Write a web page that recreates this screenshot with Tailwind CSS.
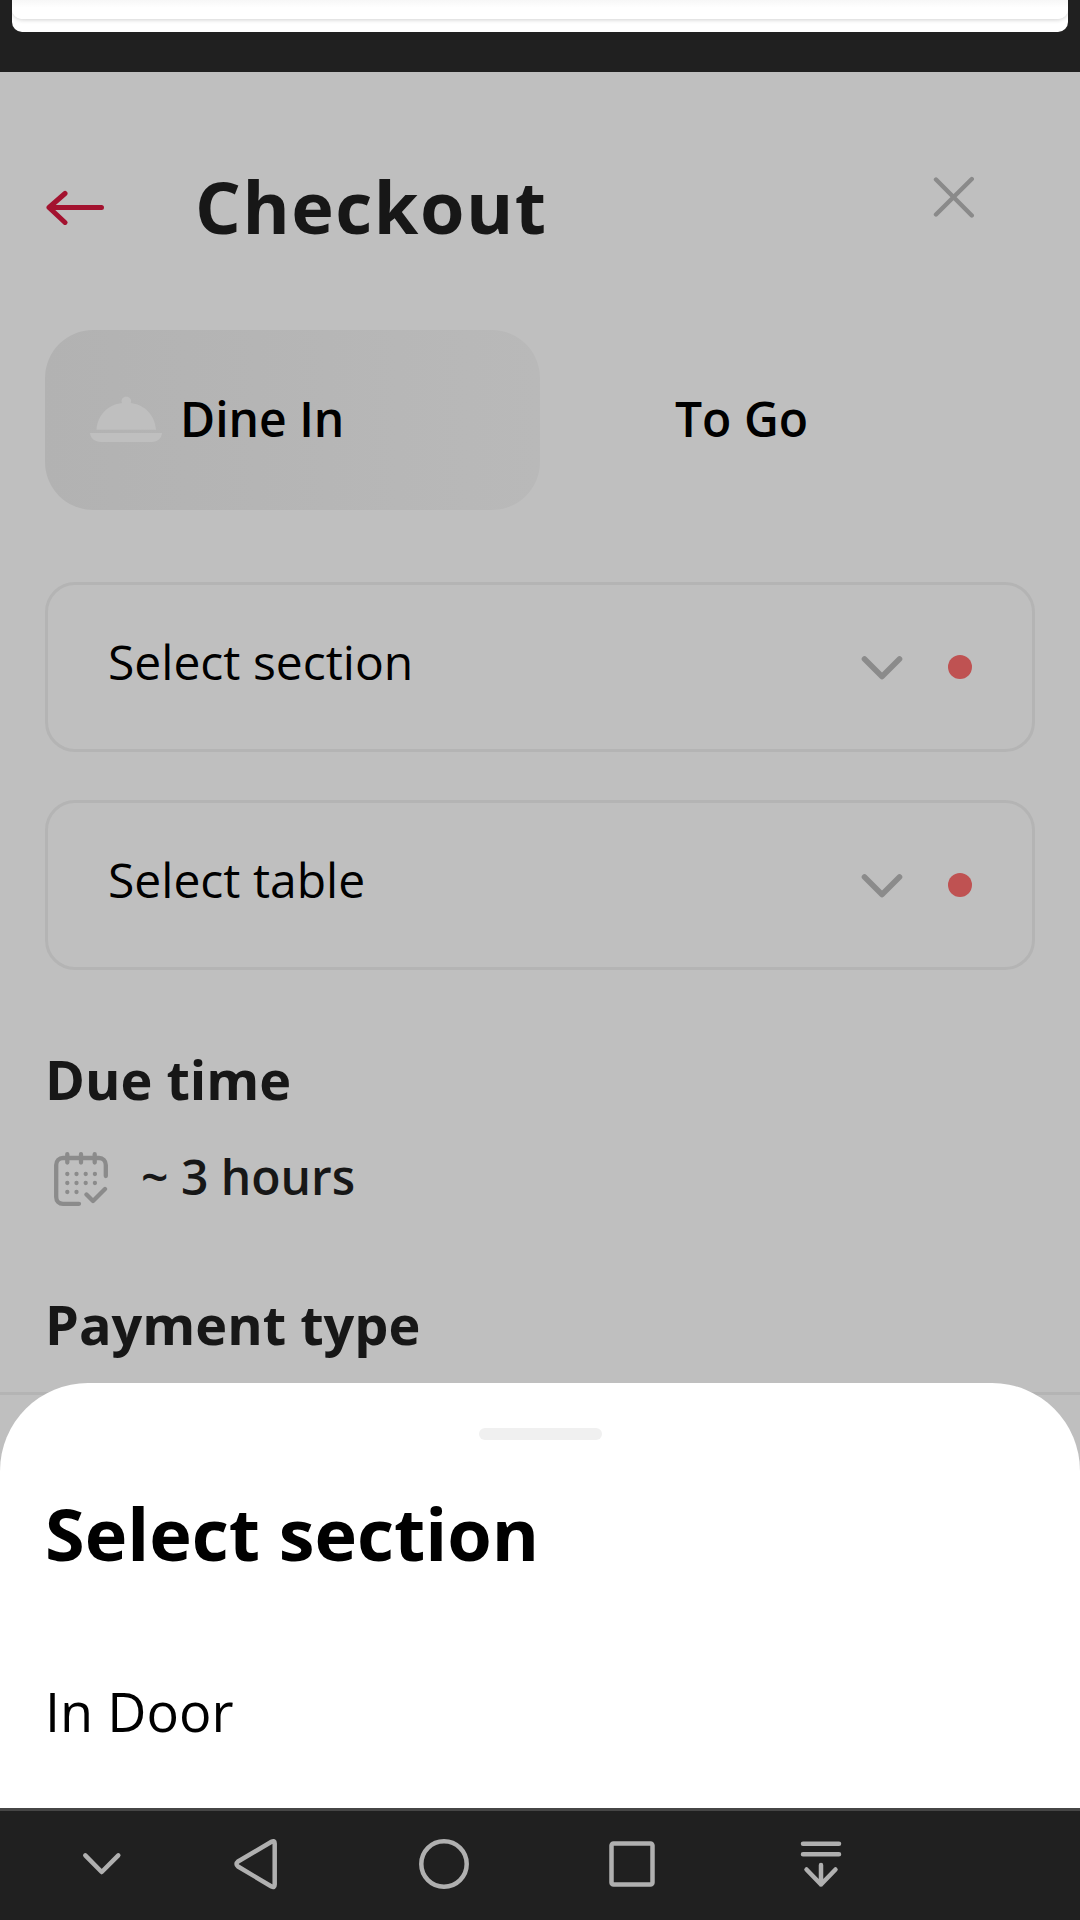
<!DOCTYPE html>
<html lang="en">
<head>
<meta charset="utf-8">
<title>Checkout</title>
<script src="https://cdn.jsdelivr.net/npm/@tailwindcss/browser@4"></script>
</head>
<body class="bg-[#202020]">
<div class="relative flex h-[1920px] w-[1080px] flex-col overflow-hidden bg-[#202020] font-['Open_Sans',sans-serif] text-black">

  <!-- Bottom edge of the card above the checkout panel -->
  <header class="h-[72px] shrink-0 px-3">
    <div class="h-8 overflow-hidden rounded-b-[10px] bg-white">
      <div class="h-[19px] rounded-b-[10px] bg-linear-to-b from-[#f7f7f7] to-white to-40% shadow-[0_1px_4px_rgba(0,0,0,0.18)]"></div>
    </div>
  </header>

  <main class="flex h-[1736px] shrink-0 flex-col bg-[#bfbfbf]">
    <div class="flex h-[258px] shrink-0 items-start pl-[45px] pr-[105px]">
      <svg class="mt-[117px] h-9 w-[61px]" viewBox="0 0 61 36" fill="none" stroke="#a3122f" stroke-width="5" stroke-linecap="round" stroke-linejoin="round"><path d="M56.500 18.500H4.500M20 4.500L4 18.500L20 33.500"/></svg>
      <h1 class="ml-[89px] mt-[98px] text-[72px] leading-[72px] font-bold tracking-[1.5px] text-[#171717]">Checkout</h1>
      <svg class="ml-auto mt-[104px] h-[42px] w-[42px]" viewBox="0 0 42 42" fill="none" stroke="#8a8a8a" stroke-width="4.400" stroke-linecap="round"><path d="M3 3.500L38.800 39.500M38.800 3L3 38.500"/></svg>
    </div>

    <div class="mx-[45px] grid h-[180px] shrink-0 grid-cols-2 text-[48px] leading-[48px] font-semibold">
      <div class="flex items-start rounded-[48px] bg-linear-to-r from-[#b2b2b2] to-[#b9b9b9] pl-[45px]">
        <svg class="mt-[66px] h-[47px] w-[72px]" viewBox="0 0 72 47" fill="#bfbfbf"><path d="M6.500 33.700C7.500 19 18 8.500 32 7C30.500 3.500 33 .8 36.300 .8S42 3.500 40.800 7C54.500 8.500 65 19 66 33.700ZM0 37H72C71.500 42.500 67.500 46 62 46H11C5 46 .5 42.500 0 37Z"/></svg>
        <span class="ml-[18px] mt-[65px]">Dine In</span>
      </div>
      <div class="flex items-start pl-[135px]"><span class="mt-[65px]">To Go</span></div>
    </div>

    <div class="mx-[45px] mt-[72px] flex shrink-0 flex-col gap-12">
      <div class="flex h-[170px] items-start rounded-[30px] border-[3px] border-[#b4b4b4] pl-[60px] pr-[60px]">
        <span class="mt-[53px] text-[48px] leading-[48px]">Select section</span>
        <svg class="ml-auto mt-[69px] h-[27px] w-[42px]" viewBox="0 0 42 27" fill="none" stroke="#8b8b8b" stroke-width="5.600" stroke-linecap="round" stroke-linejoin="round"><path d="M3.500 5L21 22.500L38.500 5"/></svg>
        <span class="ml-[45px] mt-[70px] h-6 w-6 rounded-full bg-[#bf5252]"></span>
      </div>
      <div class="flex h-[170px] items-start rounded-[30px] border-[3px] border-[#b4b4b4] pl-[60px] pr-[60px]">
        <span class="mt-[53px] text-[48px] leading-[48px]">Select table</span>
        <svg class="ml-auto mt-[69px] h-[27px] w-[42px]" viewBox="0 0 42 27" fill="none" stroke="#8b8b8b" stroke-width="5.600" stroke-linecap="round" stroke-linejoin="round"><path d="M3.500 5L21 22.500L38.500 5"/></svg>
        <span class="ml-[45px] mt-[70px] h-6 w-6 rounded-full bg-[#bf5252]"></span>
      </div>
    </div>

    <section class="mt-[82px] px-[45px] text-[#171717]">
      <h2 class="text-[54px] leading-[54px] font-bold">Due time</h2>
      <div class="mt-11 flex items-start">
        <svg class="ml-[9px] mt-[2px] h-[54px] w-[54px]" viewBox="0 0 54 54" fill="none" stroke="#8b8b8b" stroke-width="4.300" stroke-linecap="round" stroke-linejoin="round">
          <path d="M51.800 24V13C51.800 9 49 6 45 6H9C5 6 2.200 9 2.200 13V45C2.200 49 5 51.800 9 51.800H25M13.300 2.200V10.500M27 2.200V10.500M40.700 2.200V10.500M32.500 42.500L39 49L51 37"/>
          <path d="M13.300 22h.01M22.500 22h.01M31.700 22h.01M40.900 22h.01M13.300 31h.01M22.500 31h.01M31.700 31h.01M40.900 31h.01M13.300 40h.01M22.500 40h.01"/>
        </svg>
        <span class="ml-[33px] mt-[3px] text-[48px] leading-[48px] font-semibold">~ 3 hours</span>
      </div>
      <h2 class="mt-[91px] text-[54px] leading-[54px] font-bold">Payment type</h2>
    </section>
    <div class="mt-[41px] h-[3px] shrink-0 bg-[#b4b4b4]"></div>
  </main>

  <!-- Bottom sheet laid over the checkout panel -->
  <section class="absolute inset-x-0 top-[1383px] flex h-[425px] flex-col rounded-t-[88px] bg-white px-[45px]">
    <div class="mt-[45px] h-3 w-[123px] self-center rounded-full bg-[#f0f0f0]"></div>
    <h2 class="mt-[57px] text-[72px] leading-[72px] font-bold">Select section</h2>
    <p class="mt-[115px] text-[54px] leading-[54px]">In Door</p>
  </section>

  <nav class="h-28 shrink-0 border-t-[3px] border-[#464646]">
    <svg class="h-[109px] w-[1080px]" viewBox="0 1811 1080 109" fill="none" stroke="#b0b0b0" stroke-width="4.500" stroke-linecap="round" stroke-linejoin="round">
      <path d="M85.300 1855.300L101.700 1872L118.300 1855.300"/>
      <path d="M271.500 1841.800L238 1861.500Q235 1864 238 1866.500L271.500 1886.500Q274.700 1888 274.700 1884.500V1843.500Q274.700 1840 271.500 1841.800Z"/>
      <circle cx="444" cy="1864" r="22.700"/>
      <rect x="611.500" y="1843.500" width="41" height="41" rx="2"/>
      <path d="M803 1843.700H839M803 1854.300H839M821 1865V1884.500M806.500 1869.500L821 1884.500L835.500 1869.500"/>
    </svg>
  </nav>
</div>
</body>
</html>
